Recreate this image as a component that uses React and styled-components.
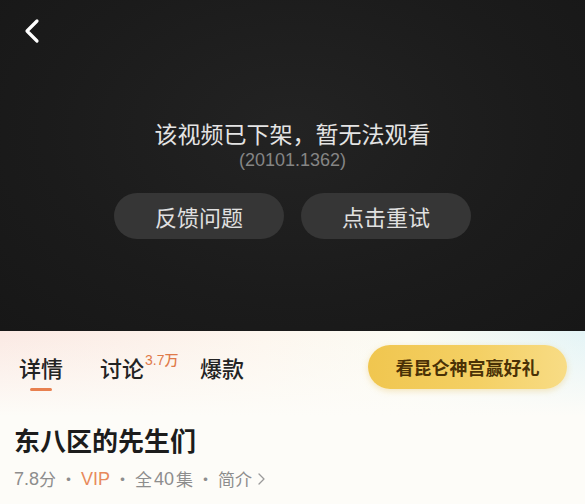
import React from "react"
import styled, { createGlobalStyle } from "styled-components"

const GlobalStyle = createGlobalStyle`
  html, body {
    margin: 0;
    padding: 0;
    background: #fdfcf8;
    font-family: "Noto Sans CJK SC", "Noto Sans", sans-serif;
  }
`

const Page = styled.div`
  width: 585px;
  height: 504px;
  overflow: hidden;
  display: flex;
  flex-direction: column;
`

const Player = styled.section`
  height: 331px;
  flex-shrink: 0;
  background: radial-gradient(ellipse at 50% 40%, #232323 0%, #1b1b1b 60%, #171717 100%);
  display: flex;
  flex-direction: column;
  align-items: center;
`

const TopBar = styled.div`
  align-self: stretch;
  height: 60px;
  padding: 18px 0 0 22px;
  box-sizing: border-box;
`

const BackButton = styled.button`
  background: none;
  border: 0;
  padding: 0;
  width: 20px;
  height: 26px;
  cursor: pointer;
  display: block;
`

const Message = styled.div`
  margin-top: 59px;
  color: #e4e4e4;
  font-size: 23px;
  line-height: 28px;
`

const ErrorCode = styled.div`
  margin-top: 2px;
  color: #858585;
  font-family: "Liberation Sans", Arial, sans-serif;
  font-size: 18px;
  line-height: 22px;
`

const Actions = styled.div`
  margin-top: 22px;
  display: flex;
  gap: 17px;
`

const PillButton = styled.button`
  width: 170px;
  height: 46px;
  border-radius: 23px;
  border: 0;
  background: #363636;
  color: #e0e0e0;
  font-family: inherit;
  font-size: 22px;
  cursor: pointer;
`

const Details = styled.section`
  flex: 1;
  background:
    linear-gradient(180deg, rgba(253, 252, 248, 0) 0%, #fdfcf8 85px),
    linear-gradient(90deg, #fbe9e3 0%, #fdf6ee 45%, #fbfbf3 70%, #e4f4f6 100%);
  padding: 14px 18px 0 14px;
`

const TabRow = styled.div`
  display: flex;
  align-items: center;
  height: 44px;
`

const Tabs = styled.nav`
  display: flex;
  align-items: center;
  flex: 1;
  padding-left: 5px;
`

const Tab = styled.span`
  position: relative;
  font-size: 22px;
  line-height: 28px;
  color: #232323;
  font-weight: 500;
  margin-right: ${(p) => p.$gap}px;

  ${(p) =>
    p.$active &&
    `
    &::after {
      content: "";
      position: absolute;
      left: 50%;
      margin-left: -11px;
      bottom: -10px;
      width: 22px;
      height: 3px;
      border-radius: 2px;
      background: #e8804f;
    }
  `}
`

const Count = styled.sup`
  position: absolute;
  left: 100%;
  top: 0;
  margin-left: 1px;
  font-family: "Liberation Sans", "Noto Sans CJK SC", sans-serif;
  font-size: 14px;
  line-height: 15px;
  color: #e07a4a;
  white-space: nowrap;
`

const PromoButton = styled.button`
  width: 199px;
  height: 44px;
  border-radius: 22px;
  border: 0;
  background: linear-gradient(90deg, #f0c64f 0%, #f4d064 55%, #f8dc85 100%);
  box-shadow: 0 2px 6px rgba(230, 190, 80, 0.35);
  color: #4a3106;
  font-family: inherit;
  font-size: 18px;
  font-weight: 700;
  cursor: pointer;
`

const Title = styled.h1`
  margin: 34px 0 0;
  font-size: 26px;
  line-height: 34px;
  font-weight: 700;
  color: #1c1c1c;
`

const Meta = styled.div`
  margin-top: 10px;
  display: flex;
  align-items: center;
  font-size: 17px;
  line-height: 24px;
  color: #8d8d8d;
`

const Dot = styled.span`
  margin: 0 4px;
`

const Vip = styled.span`
  color: #e88a5c;
  font-family: "Liberation Sans", Arial, sans-serif;
  font-size: 18px;
`

const Num = styled.span`
  font-family: "Liberation Sans", Arial, sans-serif;
  font-size: 18px;
  margin: ${(p) => p.$m || "0"};
`

const Arrow = styled.span`
  display: flex;
  margin-left: 5px;
`

function Chevron({ color, size, stroke }) {
  return (
    <svg width={size} height={size * 1.3} viewBox="0 0 10 13" fill="none">
      <path d="M7.5 1.5 L2.5 6.5 L7.5 11.5" stroke={color} strokeWidth={stroke} strokeLinecap="round" strokeLinejoin="round" />
    </svg>
  )
}

export default function App() {
  return (
    <Page>
      <GlobalStyle />
      <Player>
        <TopBar>
          <BackButton aria-label="返回">
            <Chevron color="#ffffff" size={20} stroke={1.6} />
          </BackButton>
        </TopBar>
        <Message>该视频已下架，暂无法观看</Message>
        <ErrorCode>(20101.1362)</ErrorCode>
        <Actions>
          <PillButton>反馈问题</PillButton>
          <PillButton>点击重试</PillButton>
        </Actions>
      </Player>
      <Details>
        <TabRow>
          <Tabs>
            <Tab $active $gap={37}>详情</Tab>
            <Tab $gap={56}>
              讨论<Count>3.7万</Count>
            </Tab>
            <Tab $gap={0}>爆款</Tab>
          </Tabs>
          <PromoButton>看昆仑神宫赢好礼</PromoButton>
        </TabRow>
        <Title>东八区的先生们</Title>
        <Meta>
          <Num>7.8</Num>分<Dot>·</Dot>
          <Vip>VIP</Vip>
          <Dot>·</Dot>全<Num $m="0 2px">40</Num>集<Dot>·</Dot>简介
          <Arrow>
            <svg width="9" height="14" viewBox="0 0 9 14" fill="none">
              <path d="M2 2 L7 7 L2 12" stroke="#9a9a9a" strokeWidth="1.3" strokeLinecap="round" strokeLinejoin="round" />
            </svg>
          </Arrow>
        </Meta>
      </Details>
    </Page>
  )
}
